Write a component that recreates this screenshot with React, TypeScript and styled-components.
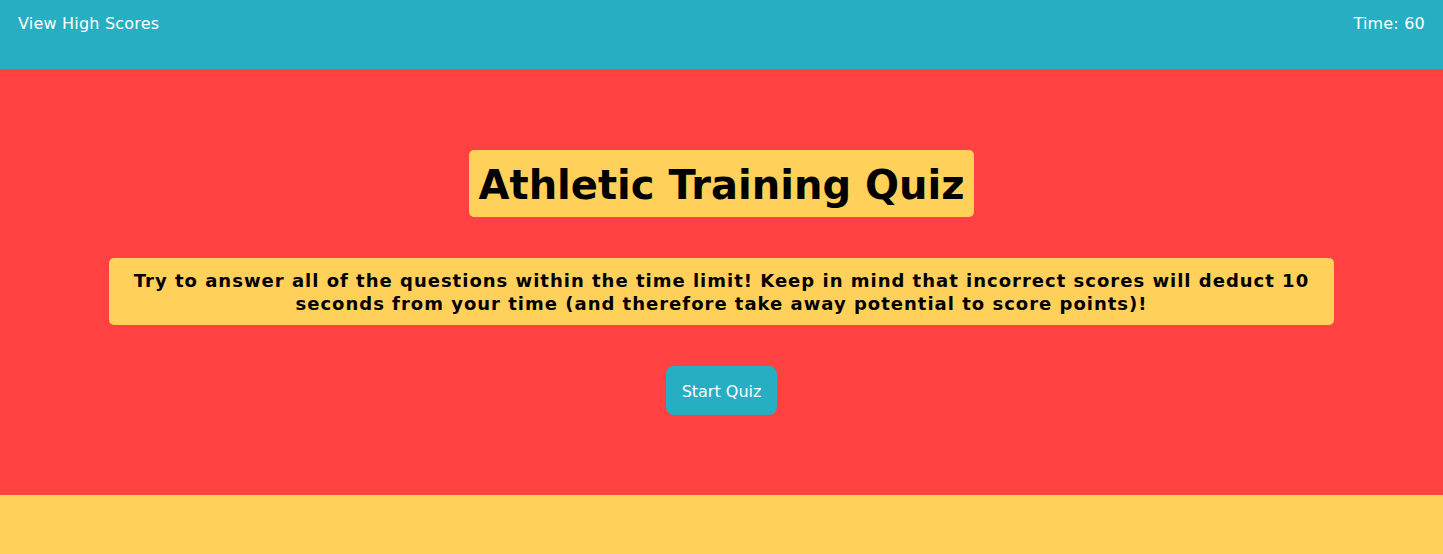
import React from "react";
import styled, { createGlobalStyle } from "styled-components";

const Global = createGlobalStyle`
  html, body { margin: 0; padding: 0; }
  body { font-family: Verdana, "DejaVu Sans", sans-serif; background: #ffd15b; }
`;

const Header = styled.header`
  height: 69px;
  background: #27aec3;
  display: flex;
  justify-content: space-between;
  align-items: flex-start;
  padding: 14px 18px 0 18px;
  box-sizing: border-box;
  color: #fff;
  font-size: 16px;
  line-height: 20px;
  letter-spacing: 0.2px;
`;

const HeaderText = styled.span``;

const Main = styled.main`
  background: #ff4141;
  height: 426px;
  box-sizing: border-box;
  padding-top: 81px;
  display: flex;
  flex-direction: column;
  align-items: center;
`;

const Title = styled.h1`
  margin: 0;
  background: #ffd15b;
  border-radius: 5px;
  padding: 11px 10px 8px;
  font-size: 40px;
  line-height: 48px;
  font-weight: bold;
  color: #000;
`;

const Intro = styled.p`
  margin: 41px 0 0;
  width: 1225px;
  box-sizing: border-box;
  background: #ffd15b;
  border-radius: 5px;
  padding: 11px 20px 10px;
  font-size: 18px;
  line-height: 23px;
  font-weight: bold;
  letter-spacing: 1px;
  text-align: center;
  color: #000;
`;

const StartButton = styled.button`
  margin-top: 41px;
  width: 111px;
  height: 49px;
  border: none;
  border-radius: 8px;
  background: #27aec3;
  color: #fff;
  font-family: inherit;
  font-size: 16px;
  padding: 2px 0 0;
  cursor: pointer;
`;

const Footer = styled.footer`
  height: 59px;
  background: #ffd15b;
`;

export default function App() {
  return (
    <>
      <Global />
      <Header>
        <HeaderText>View High Scores</HeaderText>
        <HeaderText>Time: 60</HeaderText>
      </Header>
      <Main>
        <Title>Athletic Training Quiz</Title>
        <Intro>
          Try to answer all of the questions within the time limit! Keep in mind that incorrect scores will deduct 10
          seconds from your time (and therefore take away potential to score points)!
        </Intro>
        <StartButton>Start Quiz</StartButton>
      </Main>
      <Footer />
    </>
  );
}
